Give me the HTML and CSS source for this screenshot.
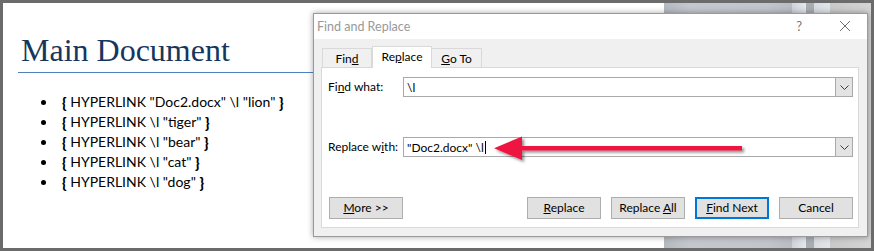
FILE: index.html
```html
<!DOCTYPE html>
<html lang="en">
<head>
  <meta charset="UTF-8" />
  <title>Find and Replace</title>
  <link rel="stylesheet" href="styles.css">
</head>
<body>
  <div class="screen">
    <div class="doc">
      <h1 class="doc-title">Main Document</h1>
      <ul class="fields">
        <li><b>{</b> HYPERLINK "Doc2.docx" \l "lion" <b>}</b></li>
        <li><b>{</b> HYPERLINK \l "tiger" <b>}</b></li>
        <li><b>{</b> HYPERLINK \l "bear" <b>}</b></li>
        <li><b>{</b> HYPERLINK \l "cat" <b>}</b></li>
        <li><b>{</b> HYPERLINK \l "dog" <b>}</b></li>
      </ul>
    </div>
    <div class="side">
      <div class="strip strip-grad"></div>
      <div class="strip strip-light"></div>
      <div class="strip strip-dark"></div>
      <div class="strip strip-light2"></div>
      <div class="strip strip-end"></div>
    </div>

    <div class="dialog">
      <div class="titlebar">
        <span class="title">Find and Replace</span>
        <span class="help">?</span>
        <svg class="close" width="12" height="12" viewBox="0 0 12 12">
          <path d="M1 1 L11 11 M11 1 L1 11" stroke="#6e6e6e" stroke-width="1" fill="none"/>
        </svg>
      </div>
      <div class="dialog-body">
        <div class="tabs">
          <div class="tab">Fin<u>d</u></div>
          <div class="tab active">Re<u>p</u>lace</div>
          <div class="tab"><u>G</u>o To</div>
        </div>
        <div class="panel">
          <div class="row">
            <label class="label">Fi<u>n</u>d what:</label>
            <div class="combo">
              <span class="combo-text">\l</span>
              <span class="combo-btn"><svg width="9" height="5" viewBox="0 0 9 5"><path d="M0.5 0.5 L4.5 4.5 L8.5 0.5" stroke="#3c3c3c" fill="none"/></svg></span>
            </div>
          </div>
          <div class="row">
            <label class="label">Replace w<u>i</u>th:</label>
            <div class="combo">
              <span class="combo-text">"Doc2.docx" \l<span class="caret"></span></span>
              <span class="combo-btn"><svg width="9" height="5" viewBox="0 0 9 5"><path d="M0.5 0.5 L4.5 4.5 L8.5 0.5" stroke="#3c3c3c" fill="none"/></svg></span>
            </div>
          </div>
          <div class="buttons">
            <button class="btn"><u>M</u>ore &gt;&gt;</button>
            <button class="btn push"><u>R</u>eplace</button>
            <button class="btn">Replace <u>A</u>ll</button>
            <button class="btn default"><u>F</u>ind Next</button>
            <button class="btn">Cancel</button>
          </div>
        </div>
      </div>
      <svg class="arrow" width="260" height="34" viewBox="0 0 260 34">
        <defs>
          <filter id="shade" x="-10%" y="-40%" width="120%" height="180%">
            <feDropShadow dx="2" dy="2" stdDeviation="1.5" flood-color="#000" flood-opacity="0.45"/>
          </filter>
        </defs>
        <g filter="url(#shade)">
          <rect x="26" y="11" width="222" height="4.5" fill="#ee1540"/>
          <path d="M0 13.2 L28 1.5 L28 25 Z" fill="#ee1540"/>
        </g>
      </svg>
    </div>
  </div>
</body>
</html>
```

FILE: styles.css
```css
* {
  box-sizing: border-box;
}

body {
  margin: 0;
  background: #fff;
}

.screen {
  position: relative;
  width: 874px;
  height: 251px;
  border: 3px solid #6b6b6b;
  display: flex;
  overflow: hidden;
}

/* word document behind the dialog */
.doc {
  width: 661px;
  background: #fff;
  padding: 27px 0 0 15px;
}

.doc-title {
  margin: 0;
  height: 43px;
  padding-left: 3px;
  font-family: "Liberation Serif", serif;
  font-weight: normal;
  font-size: 32px;
  line-height: 40px;
  color: #17365d;
  border-bottom: 1px solid #4f81bd;
}

.fields {
  list-style: none;
  margin: 19px 0 0 0;
  padding: 0 0 0 23px;
  font-family: Lato, "Liberation Sans", sans-serif;
  font-size: 14px;
  line-height: 20px;
  color: #000;
}

.fields li {
  display: flex;
  align-items: center;
  white-space: pre;
}

.fields li::before {
  content: "";
  width: 5px;
  height: 5px;
  border-radius: 50%;
  background: #000;
  margin-right: 16px;
}

.fields b {
  font-weight: 900;
  font-size: 15px;
}

.side {
  flex: 1;
  display: flex;
}

.strip-grad {
  width: 128px;
  background: linear-gradient(to right, #b4b9c0, #c4c8ce 20%, #c2c6cc 80%, #b9bdc3);
}

.strip-light {
  width: 14px;
  background: linear-gradient(to right, #cfd3d9, #e4e7eb);
}

.strip-dark {
  width: 8px;
  background: #a8adb4;
}

.strip-light2 {
  width: 16px;
  background: linear-gradient(to right, #d8dce1, #e2e5e9);
}

.strip-end {
  flex: 1;
  background: linear-gradient(to right, #c9c9c9, #d4d4d4);
}

/* find and replace dialog */
.dialog {
  position: absolute;
  left: 310px;
  top: 10px;
  width: 555px;
  height: 224px;
  border: 1px solid #9a9a9a;
  background: #f0f0f0;
  box-shadow: 0 0 6px rgba(0, 0, 0, 0.35);
  font-family: Lato, "Liberation Sans", sans-serif;
  font-size: 12px;
  color: #000;
  display: flex;
  flex-direction: column;
}

.titlebar {
  height: 25px;
  background: #fff;
  display: flex;
  align-items: center;
  padding: 0 0 1px 3px;
}

.title {
  flex: 1;
  color: #999;
  font-size: 12.5px;
}

.help {
  color: #777;
  font-size: 13px;
  margin-right: 37px;
}

.close {
  margin-right: 16px;
}

.dialog-body {
  flex: 1;
  padding: 7px 8px 8px 7px;
  display: flex;
  flex-direction: column;
}

.tabs {
  display: flex;
  align-items: flex-end;
  height: 21px;
  margin-left: 1px;
  position: relative;
  z-index: 1;
}

.tab {
  height: 19px;
  padding-top: 1px;
  border: 1px solid #d9d9d9;
  border-bottom: none;
  background: #f0f0f0;
  text-align: center;
  line-height: 17px;
  width: 50px;
}

.tab + .tab {
  border-left: none;
}

.tab.active {
  height: 22px;
  width: 60px;
  background: #fff;
  border-left: 1px solid #d9d9d9;
  margin-bottom: -1px;
  line-height: 18px;
}

.tab.active + .tab {
  width: 50px;
}

.panel {
  flex: 1;
  background: #fff;
  border: 1px solid #d9d9d9;
  padding: 9px 5px 8px 6px;
  display: flex;
  flex-direction: column;
}

.row {
  display: flex;
  align-items: center;
  height: 20px;
  margin-bottom: 40px;
}

.label {
  width: 75px;
  padding-bottom: 2px;
}

.combo {
  flex: 1;
  height: 20px;
  border: 1px solid #a9a9a9;
  display: flex;
  background: #fff;
}

.combo-text {
  flex: 1;
  padding-left: 3px;
  line-height: 17px;
  white-space: pre;
  display: flex;
  align-items: center;
}

.caret {
  display: inline-block;
  width: 1px;
  height: 13px;
  background: #000;
  margin-left: 1px;
}

.combo-btn {
  width: 17px;
  background: #e3e3e3;
  border-left: 1px solid #a9a9a9;
  display: flex;
  align-items: center;
  justify-content: center;
}

.buttons {
  display: flex;
  gap: 10px;
  margin-top: auto;
  padding-left: 1px;
}

.btn {
  width: 74px;
  height: 22px;
  padding: 0 0 1px;
  border: 1px solid #adadad;
  background: #e1e1e1;
  font-family: inherit;
  font-size: 12px;
  color: #000;
}

.btn.push {
  margin-left: auto;
}

.btn.default {
  border: 2px solid #0078d7;
}

.arrow {
  position: absolute;
  left: 180px;
  top: 121px;
}
```
